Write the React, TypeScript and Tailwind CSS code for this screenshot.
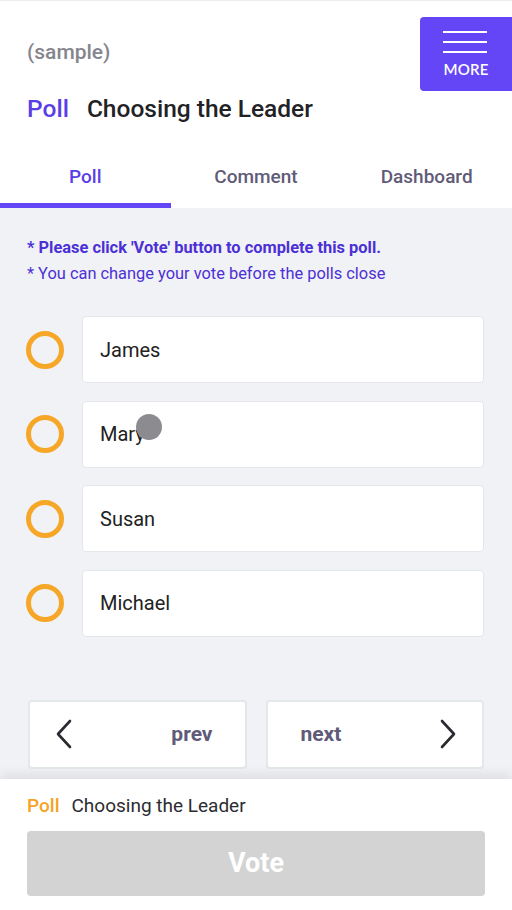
const OPTIONS = ['James', 'Mary', 'Susan', 'Michael'];
const TABS = ['Poll', 'Comment', 'Dashboard'];

function OptionRow({ name }: { name: string }) {
  return (
    <div className="flex items-center gap-[18px] pl-[26px] pr-[28px]">
      <span className="w-[38px] h-[38px] rounded-full border-[5px] border-[#f7a728] shrink-0" />
      <div className="flex-1 h-[67px] bg-white border border-[#e3e7ec] rounded-[4px] flex items-center px-[17px] text-[20px] text-[#222]">
        {name}
      </div>
    </div>
  );
}

function Chevron({ dir }: { dir: 'left' | 'right' }) {
  return (
    <svg width="16" height="30" viewBox="0 0 16 30" fill="none" stroke="#2a2a30" strokeWidth="2.6" strokeLinecap="round" strokeLinejoin="round">
      {dir === 'left' ? <path d="M14 2 2 15l12 13" /> : <path d="M2 2l12 13L2 28" />}
    </svg>
  );
}

export default function App() {
  return (
    <div className="relative w-[512px] h-[910px] flex flex-col bg-white border-t border-[#ececec] overflow-hidden font-['Roboto',sans-serif]">
      {/* Header */}
      <div className="relative h-[149px] pl-[27px]">
        <p className="pt-[37px] text-[21px] leading-[28px] font-medium text-[#85858e]">(sample)</p>
        <h1 className="mt-[28px] flex items-center gap-[18px] text-[24.5px] leading-[30px] font-medium">
          <span className="text-[#5a3ee6]">Poll</span>
          <span className="text-[#222226]">Choosing the Leader</span>
        </h1>
        <button className="absolute left-[420px] top-[16px] w-[92px] h-[74px] bg-[#6446f6] rounded-l-[4px] flex flex-col items-center pt-[14px]">
          <span className="flex flex-col gap-[8px] w-[44px] mr-[2px]">
            <span className="h-[2px] bg-white" />
            <span className="h-[2px] bg-white" />
            <span className="h-[2px] bg-white" />
          </span>
          <span className="mt-[7px] text-[15px] leading-[18px] text-white font-['Lato',sans-serif] font-semibold tracking-[0.2px]">MORE</span>
        </button>
      </div>

      {/* Tabs */}
      <div className="grid grid-cols-3 h-[58px]">
        {TABS.map((t, i) => (
          <div key={t} className="relative flex items-start justify-center pt-[15px]">
            <span className={`text-[19px] leading-[24px] font-medium ${i === 0 ? 'text-[#5a3ee6]' : 'text-[#5f5b78]'}`}>{t}</span>
            {i === 0 && <span className="absolute left-0 right-0 bottom-0 h-[5px] bg-[#6446f6]" />}
          </div>
        ))}
      </div>

      {/* Content */}
      <div className="flex-1 bg-[#f0f2f5] flex flex-col">
        <div className="pl-[27px] pt-[27px] text-[16.4px] leading-[26px] text-[#4c30d6]">
          <p className="font-bold">* Please click 'Vote' button to complete this poll.</p>
          <p>* You can change your vote before the polls close</p>
        </div>
        <div className="mt-[29px] flex flex-col gap-[17.6px]">
          {OPTIONS.map(o => <OptionRow key={o} name={o} />)}
        </div>
        <div className="mt-[63px] grid grid-cols-2 gap-[19px] pl-[28px] pr-[28px]">
          <button className="h-[69px] bg-white border-2 border-[#e3e8eb] rounded-[4px] flex items-center justify-between pl-[26px] pr-[32px]">
            <Chevron dir="left" />
            <span className="text-[21px] font-bold text-[#5f5b78]">prev</span>
          </button>
          <button className="h-[69px] bg-white border-2 border-[#e3e8eb] rounded-[4px] flex items-center justify-between pl-[33px] pr-[26px]">
            <span className="text-[21px] font-bold text-[#5f5b78]">next</span>
            <Chevron dir="right" />
          </button>
        </div>
      </div>

      {/* Footer */}
      <div className="relative h-[131px] bg-white px-[27px] pt-[14px] shadow-[0_-6px_10px_rgba(0,0,0,0.07)]">
        <p className="flex items-center gap-[12px] text-[19px] leading-[26px]">
          <span className="font-medium text-[#f5a324]">Poll</span>
          <span className="text-[#2c2c30]">Choosing the Leader</span>
        </p>
        <button className="mt-[12px] w-full h-[65px] bg-[#d3d3d3] rounded-[4px] text-[27px] font-bold text-white">
          Vote
        </button>
      </div>

      {/* touch indicator */}
      <span className="absolute left-[136px] top-[413px] w-[26px] h-[26px] rounded-full bg-[#8b8b90]" />
    </div>
  );
}
